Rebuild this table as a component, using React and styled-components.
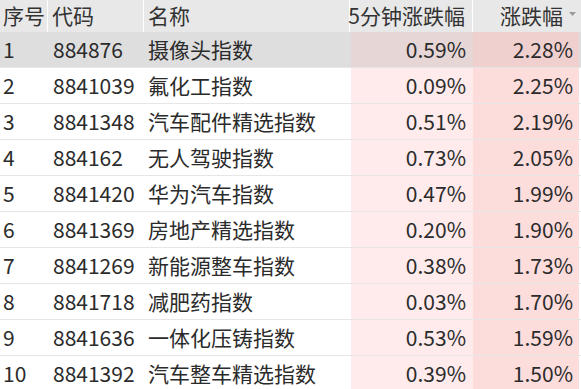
import React from "react";
import styled, { createGlobalStyle, css } from "styled-components";

const GlobalStyle = createGlobalStyle`
  html, body {
    margin: 0;
    padding: 0;
    background: #fff;
  }
  body {
    font-family: "Noto Sans CJK SC", "Noto Sans", sans-serif;
    color: #2b2b2b;
    overflow: hidden;
  }
`;

const COLS = "48px 96px 206px 123px 106px 1fr";

const Table = styled.div`
  width: 581px;
  font-size: 21px;
`;

const HeaderRow = styled.div`
  display: grid;
  grid-template-columns: ${COLS};
  height: 32px;
  background: #e8e8e8;
`;

const HeadCell = styled.div`
  display: flex;
  align-items: center;
  justify-content: ${(p) => (p.$right ? "flex-end" : "flex-start")};
  padding: ${(p) => p.$pad || "0"};
  border-right: ${(p) => (p.$noLine ? "none" : "1px solid #fff")};
  color: #333;
  white-space: nowrap;
  line-height: 1;
  padding-bottom: 1px;
`;

const SortArrow = styled.svg`
  width: 7px;
  height: 4px;
  margin-left: 6px;
  margin-top: -4px;
  fill: #9a9a9a;
`;

const Row = styled.div`
  display: grid;
  grid-template-columns: ${COLS};
  height: 35px;
  border-bottom: 1px solid #e6e6e6;
  background: ${(p) => (p.$selected ? "#dedede" : "#fff")};
`;

const Cell = styled.div`
  display: flex;
  align-items: center;
  justify-content: ${(p) => (p.$right ? "flex-end" : "flex-start")};
  padding: ${(p) => p.$pad || "0"};
  white-space: nowrap;
  line-height: 1;
  ${(p) =>
    p.$tone === "light" &&
    css`
      background: ${p.$selected ? "#e6d6d6" : "#ffebeb"};
      margin-left: 1px;
    `}
  ${(p) =>
    p.$tone === "strong" &&
    css`
      background: ${p.$selected ? "#f0cfcf" : "#fddcdc"};
    `}
`;

const rows = [
  ["1", "884876", "摄像头指数", "0.59%", "2.28%"],
  ["2", "8841039", "氟化工指数", "0.09%", "2.25%"],
  ["3", "8841348", "汽车配件精选指数", "0.51%", "2.19%"],
  ["4", "884162", "无人驾驶指数", "0.73%", "2.05%"],
  ["5", "8841420", "华为汽车指数", "0.47%", "1.99%"],
  ["6", "8841369", "房地产精选指数", "0.20%", "1.90%"],
  ["7", "8841269", "新能源整车指数", "0.38%", "1.73%"],
  ["8", "8841718", "减肥药指数", "0.03%", "1.70%"],
  ["9", "8841636", "一体化压铸指数", "0.53%", "1.59%"],
  ["10", "8841392", "汽车整车精选指数", "0.39%", "1.50%"],
];

export default function App() {
  return (
    <>
      <GlobalStyle />
      <Table>
        <HeaderRow>
          <HeadCell $pad="0 0 0 3px">序号</HeadCell>
          <HeadCell $pad="0 0 0 4px">代码</HeadCell>
          <HeadCell $pad="0 0 0 4px">名称</HeadCell>
          <HeadCell $right $pad="0 7px 0 0">5分钟涨跌幅</HeadCell>
          <HeadCell $right $noLine $pad="0 3px 0 0">
            涨跌幅
            <SortArrow viewBox="0 0 7 4">
              <polygon points="0,0 7,0 3.5,4" />
            </SortArrow>
          </HeadCell>
          <HeadCell $noLine />
        </HeaderRow>
        {rows.map(([no, code, name, five, pct], i) => {
          const selected = i === 0;
          return (
            <Row key={no} $selected={selected}>
              <Cell $pad="0 0 0 3px">{no}</Cell>
              <Cell $pad="0 0 0 5px">{code}</Cell>
              <Cell $pad="0 0 0 4px">{name}</Cell>
              <Cell $right $tone="light" $selected={selected} $pad="0 7px 0 0">
                {five}
              </Cell>
              <Cell $right $tone="strong" $selected={selected} $pad="0 6px 0 0">
                {pct}
              </Cell>
              <Cell />
            </Row>
          );
        })}
      </Table>
    </>
  );
}
